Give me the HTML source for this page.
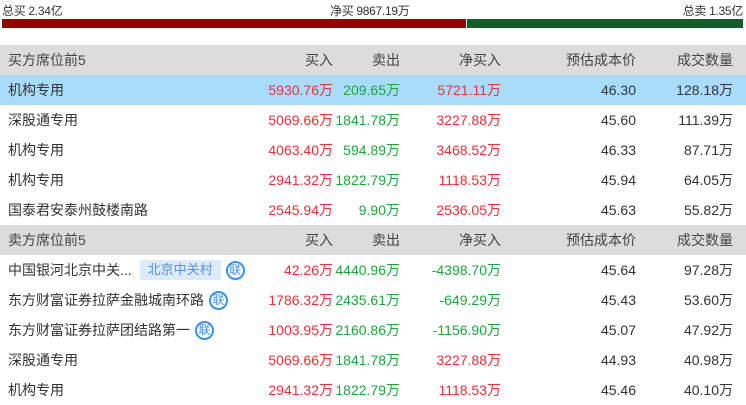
<!DOCTYPE html>
<html><head><meta charset="utf-8"><style>
*{margin:0;padding:0;box-sizing:border-box}
body{width:746px;height:404px;overflow:hidden;background:#fff;font-family:"Liberation Sans","Noto Sans CJK SC",sans-serif;font-size:14px;color:#333}
.top{position:relative;height:45px}
.top span{position:absolute;top:2px;font-size:12px;color:#333;letter-spacing:-0.3px}
.bar{position:absolute;top:19px;height:9px}
.row{position:relative;height:30px;line-height:30px}
.row div{position:absolute;top:0}
.hd{background:#dcdcdc;color:#444}
.sel{background:#a8dcfa}
.n{left:8px}
.c1{right:413px}.c2{right:346px}.c3{right:245px}.c4{right:110px}.c5{right:13px}
.r{color:#f0303a}.g{color:#1aa83a}
.tag{display:inline-block;background:#dcebfa;color:#5a8fd8;font-size:13px;line-height:20px;padding:0 8px;margin-left:8px;vertical-align:1px}
.lian{display:inline-block;width:19px;height:19px;border:2px solid #3d8ff0;border-radius:50%;color:#3d8ff0;font-size:12px;line-height:15px;text-align:center;margin-left:5px;vertical-align:1px}
</style></head><body>
<div class="top">
<span style="left:2px">总买 2.34亿</span>
<span style="left:330px">净买 9867.19万</span>
<span style="right:3px">总卖 1.35亿</span>
<div class="bar" style="left:2px;width:464px;background:#9a0000"></div>
<div class="bar" style="left:467px;width:276px;background:#135e28"></div>
</div>
<div class="row hd"><div class="n">买方席位前5</div><div class="c1">买入</div><div class="c2">卖出</div><div class="c3">净买入</div><div class="c4">预估成本价</div><div class="c5">成交数量</div></div>
<div class="row sel"><div class="n">机构专用</div><div class="c1 r">5930.76万</div><div class="c2 g">209.65万</div><div class="c3 r">5721.11万</div><div class="c4">46.30</div><div class="c5">128.18万</div></div>
<div class="row"><div class="n">深股通专用</div><div class="c1 r">5069.66万</div><div class="c2 g">1841.78万</div><div class="c3 r">3227.88万</div><div class="c4">45.60</div><div class="c5">111.39万</div></div>
<div class="row"><div class="n">机构专用</div><div class="c1 r">4063.40万</div><div class="c2 g">594.89万</div><div class="c3 r">3468.52万</div><div class="c4">46.33</div><div class="c5">87.71万</div></div>
<div class="row"><div class="n">机构专用</div><div class="c1 r">2941.32万</div><div class="c2 g">1822.79万</div><div class="c3 r">1118.53万</div><div class="c4">45.94</div><div class="c5">64.05万</div></div>
<div class="row"><div class="n">国泰君安泰州鼓楼南路</div><div class="c1 r">2545.94万</div><div class="c2 g">9.90万</div><div class="c3 r">2536.05万</div><div class="c4">45.63</div><div class="c5">55.82万</div></div>
<div class="row hd"><div class="n">卖方席位前5</div><div class="c1">买入</div><div class="c2">卖出</div><div class="c3">净买入</div><div class="c4">预估成本价</div><div class="c5">成交数量</div></div>
<div class="row"><div class="n">中国银河北京中关...<span class="tag">北京中关村</span><span class="lian">联</span></div><div class="c1 r">42.26万</div><div class="c2 g">4440.96万</div><div class="c3 g">-4398.70万</div><div class="c4">45.64</div><div class="c5">97.28万</div></div>
<div class="row"><div class="n">东方财富证券拉萨金融城南环路<span class="lian">联</span></div><div class="c1 r">1786.32万</div><div class="c2 g">2435.61万</div><div class="c3 g">-649.29万</div><div class="c4">45.43</div><div class="c5">53.60万</div></div>
<div class="row"><div class="n">东方财富证券拉萨团结路第一<span class="lian">联</span></div><div class="c1 r">1003.95万</div><div class="c2 g">2160.86万</div><div class="c3 g">-1156.90万</div><div class="c4">45.07</div><div class="c5">47.92万</div></div>
<div class="row"><div class="n">深股通专用</div><div class="c1 r">5069.66万</div><div class="c2 g">1841.78万</div><div class="c3 r">3227.88万</div><div class="c4">44.93</div><div class="c5">40.98万</div></div>
<div class="row"><div class="n">机构专用</div><div class="c1 r">2941.32万</div><div class="c2 g">1822.79万</div><div class="c3 r">1118.53万</div><div class="c4">45.46</div><div class="c5">40.10万</div></div>
</body></html>
